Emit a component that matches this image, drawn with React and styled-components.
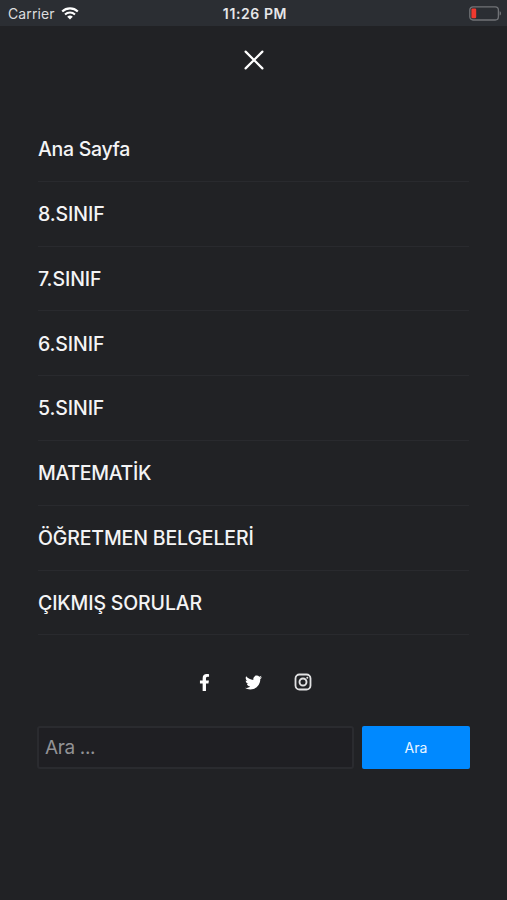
import React, { useState } from "react";
import styled, { createGlobalStyle } from "styled-components";
import { FaFacebookF, FaTwitter } from "react-icons/fa";

const links = [
  { title: "Ana Sayfa", spacing: "-0.3px" },
  { title: "8.SINIF", spacing: "-0.1px" },
  { title: "7.SINIF", spacing: "-0.1px" },
  { title: "6.SINIF", spacing: "-0.1px" },
  { title: "5.SINIF", spacing: "-0.1px" },
  { title: "MATEMATİK", spacing: "-0.3px" },
  { title: "ÖĞRETMEN BELGELERİ", spacing: "-0.15px" },
  { title: "ÇIKMIŞ SORULAR", spacing: "-0.15px" },
];

const WifiIcon = () => (
  <svg width="18" height="13" viewBox="0 0 18 13" fill="none">
    <path d="M1.2 4.5a11.2 11.2 0 0 1 15.6 0" stroke="#fff" strokeWidth="2.2" />
    <path d="M4 7.5a7.2 7.2 0 0 1 10 0" stroke="#fff" strokeWidth="2" />
    <path d="M9 12.6 6.2 9.8a4 4 0 0 1 5.6 0z" fill="#fff" />
  </svg>
);

const BatteryIcon = () => (
  <svg width="33" height="15" viewBox="0 0 33 15" fill="none">
    <rect x="0.8" y="0.8" width="28.6" height="13.2" rx="3.2" stroke="#717377" strokeWidth="1.3" />
    <path d="M30.6 5.2c1.9.5 1.9 3.9 0 4.4z" fill="#717377" />
    <rect x="2.4" y="2.5" width="4.8" height="9.8" rx="1.2" fill="#f0392f" />
  </svg>
);

const CloseIcon = () => (
  <svg width="20" height="20" viewBox="0 0 20 20">
    <path d="M1.6 1.6 18.4 18.4M18.4 1.6 1.6 18.4" stroke="#fff" strokeWidth="2.2" strokeLinecap="round" />
  </svg>
);

const InstagramIcon = () => (
  <svg width="18" height="18" viewBox="0 0 18 18" fill="none" stroke="#e2e2e3">
    <rect x="1.5" y="1.5" width="15" height="15" rx="4" strokeWidth="1.8" />
    <circle cx="9" cy="9" r="3.5" strokeWidth="1.9" />
    <circle cx="13.3" cy="4.7" r="1" fill="#e2e2e3" stroke="none" />
  </svg>
);

const App = () => {
  const [search, setSearch] = useState("");
  return (
    <Screen>
      <GlobalStyle />
      <StatusBar>
        <Carrier>
          Carrier <WifiIcon />
        </Carrier>
        <Time>11:26 PM</Time>
        <Battery>
          <BatteryIcon />
        </Battery>
      </StatusBar>

      <CloseButton aria-label="Kapat">
        <CloseIcon />
      </CloseButton>

      <Menu>
        {links.map((link) => (
          <MenuItem key={link.title}>
            <MenuLink href="#" $spacing={link.spacing}>
              {link.title}
            </MenuLink>
          </MenuItem>
        ))}
      </Menu>

      <Social>
        <SocialLink href="#" aria-label="Facebook">
          <FaFacebookF size={17} />
        </SocialLink>
        <SocialLink href="#" aria-label="Twitter">
          <FaTwitter size={17} />
        </SocialLink>
        <SocialLink href="#" aria-label="Instagram">
          <InstagramIcon />
        </SocialLink>
      </Social>

      <SearchForm onSubmit={(e) => e.preventDefault()}>
        <SearchInput
          placeholder="Ara ..."
          value={search}
          onChange={(e) => setSearch(e.target.value)}
        />
        <SearchButton>Ara</SearchButton>
      </SearchForm>
    </Screen>
  );
};

const GlobalStyle = createGlobalStyle`
  * {
    box-sizing: border-box;
  }
  body {
    margin: 0;
    background: #212225;
    font-family: Inter, "Liberation Sans", sans-serif;
  }
`;

const Screen = styled.div`
  display: flex;
  flex-direction: column;
  height: 900px;
  background: #212225;
  color: #f4f4f5;
`;

const StatusBar = styled.header`
  display: grid;
  grid-template-columns: 1fr auto 1fr;
  align-items: center;
  height: 26px;
  padding: 1px 5px 0 8px;
  background: #2b2e33;
`;

const Carrier = styled.span`
  display: flex;
  align-items: center;
  gap: 6px;
  font-size: 14px;
  letter-spacing: 0.1px;
  color: #dcdddf;
`;

const Time = styled.span`
  font-size: 14px;
  font-weight: 600;
  letter-spacing: 0.6px;
  color: #e6e7e9;
`;

const Battery = styled.span`
  display: flex;
  justify-content: flex-end;
`;

const CloseButton = styled.button`
  align-self: center;
  display: flex;
  margin-top: 24px;
  padding: 0;
  border: 0;
  background: none;
`;

const Menu = styled.ul`
  margin: 47px 38px 0;
  padding: 0;
  list-style: none;
`;

const MenuItem = styled.li`
  display: flex;
  align-items: center;
  height: 64.8px;
  padding-top: 0.6px;
  border-bottom: 1px solid #292a2e;
`;

const MenuLink = styled.a`
  font-size: 19.5px;
  font-weight: 500;
  letter-spacing: ${(props) => props.$spacing};
  white-space: nowrap;
  color: #f4f4f5;
  text-decoration: none;
`;

const Social = styled.div`
  display: flex;
  justify-content: center;
  gap: 31px;
  margin-top: 38px;
`;

const SocialLink = styled.a`
  display: flex;
  align-items: center;
  justify-content: center;
  width: 18px;
  height: 18px;
  color: #fff;
`;

const SearchForm = styled.form`
  display: flex;
  gap: 8px;
  margin: 35px 37px 0;
`;

const SearchInput = styled.input`
  flex: 1;
  min-width: 0;
  height: 43px;
  padding: 0 6px;
  border: 2px solid #2a2b2f;
  border-radius: 3px;
  outline: none;
  background: #1f1f23;
  font-family: inherit;
  font-size: 19px;
  letter-spacing: -0.35px;
  color: #f4f4f5;
  &::placeholder {
    color: #929295;
  }
`;

const SearchButton = styled.button`
  width: 108px;
  height: 43px;
  padding: 0;
  border: 0;
  border-radius: 2px;
  background: #0089ff;
  font-family: inherit;
  font-size: 14px;
  color: #e8f4ff;
`;

export default App;
